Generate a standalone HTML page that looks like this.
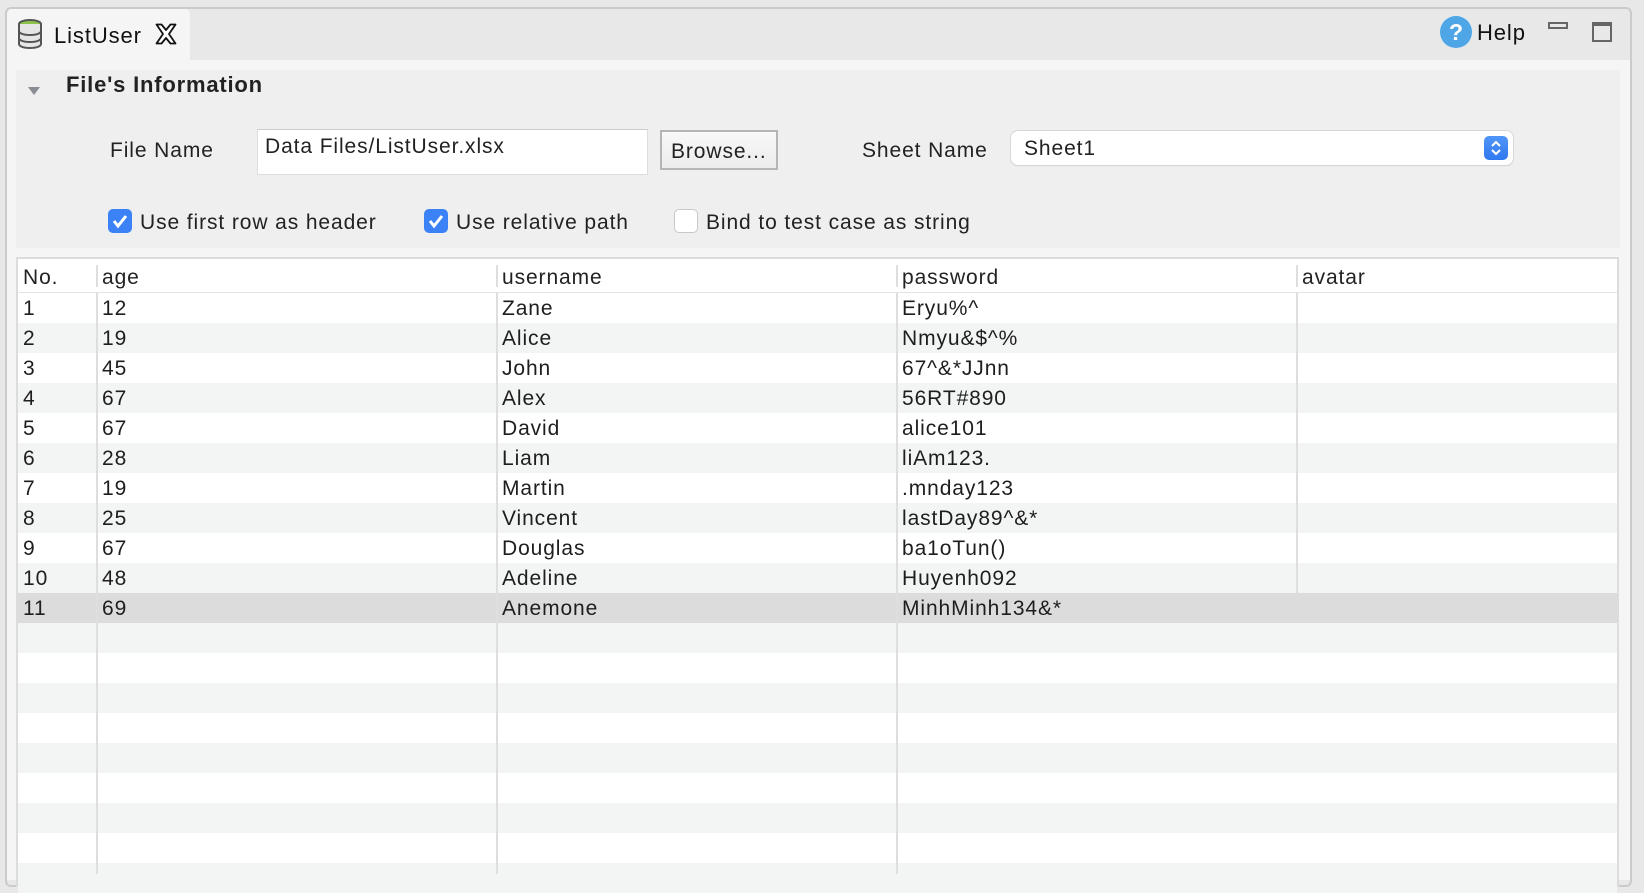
<!DOCTYPE html>
<html><head><meta charset="utf-8"><style>
*{box-sizing:border-box;margin:0;padding:0}
body{width:1644px;height:874px;background:#e8e8e8;font-family:"Liberation Sans",sans-serif;color:#222;position:relative;overflow:hidden}
.a{position:absolute}
.t{font-size:21px;white-space:nowrap;letter-spacing:0.9px}
.row{position:absolute;left:18px;width:1599px;height:30px}
.cell{position:absolute;top:4px;font-size:21px;color:#1e1e1e;white-space:nowrap;letter-spacing:0.9px}
.vl{position:absolute;top:258px;bottom:0;width:2px;background:#dedede}
.cb{position:absolute;width:24px;height:24px;border-radius:5px}
</style></head><body>
<div class="a" style="left:5px;top:7px;width:1627px;height:880px;border:2px solid #cbcbcb;border-radius:6px;background:#e8e8e8"></div>
<div class="a" style="left:7px;top:9px;width:183px;height:55px;background:#f5f5f5;border-radius:5px 5px 0 0"></div>
<svg class="a" style="left:17px;top:19px" width="26" height="30" viewBox="0 0 26 30">
<ellipse cx="13" cy="5" rx="11" ry="4" fill="#8bc34a" stroke="#555" stroke-width="2"/>
<path d="M2 5v20c0 2.5 5 4 11 4s11-1.5 11-4V5" fill="#e6e6e6" stroke="#555" stroke-width="2"/>
<path d="M2 12c0 2.5 5 4 11 4s11-1.5 11-4M2 19c0 2.5 5 4 11 4s11-1.5 11-4" fill="none" stroke="#555" stroke-width="2"/>
</svg>
<div class="a t" style="left:54px;top:23px;font-size:22px;color:#111">ListUser</div>
<svg class="a" style="left:154px;top:22px" width="24" height="24" viewBox="0 0 24 24"><path d="M2.5 2.5h5L12 8l4.5-5.5h5L15 12l6.5 9.5h-5L12 16l-4.5 5.5h-5L9 12z" fill="#fff" stroke="#111" stroke-width="1.8" stroke-linejoin="round"/></svg>
<svg class="a" style="left:1440px;top:16px" width="32" height="32"><circle cx="16" cy="16" r="16" fill="#4ea6e6"/><text x="16" y="24" font-family="Liberation Sans" font-weight="bold" font-size="23" fill="#fff" text-anchor="middle">?</text></svg>
<div class="a t" style="left:1477px;top:20px;font-size:22px;color:#111">Help</div>
<div class="a" style="left:1548px;top:22px;width:20px;height:7px;border:2px solid #666"></div>
<div class="a" style="left:1592px;top:22px;width:20px;height:20px;border:2px solid #666;border-top-width:4px"></div>
<div class="a" style="left:7px;top:60px;width:1623px;height:820px;background:#f5f5f5"></div>
<div class="a" style="left:16px;top:70px;width:1604px;height:178px;background:#efefef"></div>
<svg class="a" style="left:27px;top:86px" width="14" height="10"><path d="M1 1h12L7 9z" fill="#8a8d93"/></svg>
<div class="a t" style="left:66px;top:72px;font-weight:bold;font-size:22px;color:#222;letter-spacing:0.8px">File's Information</div>
<div class="a t" style="left:110px;top:139px">File Name</div>
<div class="a" style="left:257px;top:129px;width:391px;height:46px;background:#fff;border:1px solid #ddd;border-top-color:#ccc"></div>
<div class="a t" style="left:265px;top:135px">Data Files/ListUser.xlsx</div>
<div class="a" style="left:660px;top:130px;width:118px;height:40px;background:linear-gradient(#f8f8f8,#ececec);border:2px solid #b5b5b5"></div>
<div class="a t" style="left:671px;top:140px">Browse...</div>
<div class="a t" style="left:862px;top:139px">Sheet Name</div>
<div class="a" style="left:1011px;top:131px;width:502px;height:34px;background:#fff;border-radius:7px;box-shadow:0 0 0 1px #d6d6d6,0 1px 1px #ccc"></div>
<div class="a t" style="left:1024px;top:137px">Sheet1</div>
<div class="a" style="left:1484px;top:136px;width:24px;height:24px;border-radius:5px;background:linear-gradient(#4f95f7,#2f78ef)"></div>
<svg class="a" style="left:1484px;top:136px" width="24" height="24"><path d="M8 10l4-4 4 4M8 14l4 4 4-4" fill="none" stroke="#fff" stroke-width="2"/></svg>
<div class="cb" style="left:108px;top:209px;background:#3b82f6"></div>
<svg class="a" style="left:108px;top:209px" width="24" height="24"><path d="M6 12l4 5 8-10" fill="none" stroke="#fff" stroke-width="3"/></svg>
<div class="a t" style="left:140px;top:211px">Use first row as header</div>
<div class="cb" style="left:424px;top:209px;background:#3b82f6"></div>
<svg class="a" style="left:424px;top:209px" width="24" height="24"><path d="M6 12l4 5 8-10" fill="none" stroke="#fff" stroke-width="3"/></svg>
<div class="a t" style="left:456px;top:211px">Use relative path</div>
<div class="cb" style="left:674px;top:209px;background:#fff;border:1px solid #c8c8c8"></div>
<div class="a t" style="left:706px;top:211px">Bind to test case as string</div>
<div class="a" style="left:16px;top:257px;width:1603px;height:630px;background:#fff;border:2px solid #dcdcdc"></div>
<div class="a" style="left:18px;top:292px;width:1599px;height:1px;background:#e4e4e4"></div>
<div class="a t" style="left:23px;top:266px">No.</div>
<div class="a t" style="left:102px;top:266px">age</div>
<div class="a t" style="left:502px;top:266px">username</div>
<div class="a t" style="left:902px;top:266px">password</div>
<div class="a t" style="left:1302px;top:266px">avatar</div>
<div class="a" style="left:96px;top:265px;width:2px;height:22px;background:#dedede"></div>
<div class="a" style="left:496px;top:265px;width:2px;height:22px;background:#dedede"></div>
<div class="a" style="left:896px;top:265px;width:2px;height:22px;background:#dedede"></div>
<div class="a" style="left:1296px;top:265px;width:2px;height:22px;background:#dedede"></div>
<div class="row" style="top:293px;background:#fff"><span class="cell" style="left:5px">1</span><span class="cell" style="left:84px">12</span><span class="cell" style="left:484px">Zane</span><span class="cell" style="left:884px">Eryu%^</span></div>
<div class="row" style="top:323px;background:#f3f4f4"><span class="cell" style="left:5px">2</span><span class="cell" style="left:84px">19</span><span class="cell" style="left:484px">Alice</span><span class="cell" style="left:884px">Nmyu&amp;$^%</span></div>
<div class="row" style="top:353px;background:#fff"><span class="cell" style="left:5px">3</span><span class="cell" style="left:84px">45</span><span class="cell" style="left:484px">John</span><span class="cell" style="left:884px">67^&amp;*JJnn</span></div>
<div class="row" style="top:383px;background:#f3f4f4"><span class="cell" style="left:5px">4</span><span class="cell" style="left:84px">67</span><span class="cell" style="left:484px">Alex</span><span class="cell" style="left:884px">56RT#890</span></div>
<div class="row" style="top:413px;background:#fff"><span class="cell" style="left:5px">5</span><span class="cell" style="left:84px">67</span><span class="cell" style="left:484px">David</span><span class="cell" style="left:884px">alice101</span></div>
<div class="row" style="top:443px;background:#f3f4f4"><span class="cell" style="left:5px">6</span><span class="cell" style="left:84px">28</span><span class="cell" style="left:484px">Liam</span><span class="cell" style="left:884px">liAm123.</span></div>
<div class="row" style="top:473px;background:#fff"><span class="cell" style="left:5px">7</span><span class="cell" style="left:84px">19</span><span class="cell" style="left:484px">Martin</span><span class="cell" style="left:884px">.mnday123</span></div>
<div class="row" style="top:503px;background:#f3f4f4"><span class="cell" style="left:5px">8</span><span class="cell" style="left:84px">25</span><span class="cell" style="left:484px">Vincent</span><span class="cell" style="left:884px">lastDay89^&amp;*</span></div>
<div class="row" style="top:533px;background:#fff"><span class="cell" style="left:5px">9</span><span class="cell" style="left:84px">67</span><span class="cell" style="left:484px">Douglas</span><span class="cell" style="left:884px">ba1oTun()</span></div>
<div class="row" style="top:563px;background:#f3f4f4"><span class="cell" style="left:5px">10</span><span class="cell" style="left:84px">48</span><span class="cell" style="left:484px">Adeline</span><span class="cell" style="left:884px">Huyenh092</span></div>
<div class="row" style="top:593px;background:#dcdcdc"><span class="cell" style="left:5px">11</span><span class="cell" style="left:84px">69</span><span class="cell" style="left:484px">Anemone</span><span class="cell" style="left:884px">MinhMinh134&amp;*</span></div>
<div class="row" style="top:623px;background:#f3f4f4"></div>
<div class="row" style="top:683px;background:#f3f4f4"></div>
<div class="row" style="top:743px;background:#f3f4f4"></div>
<div class="row" style="top:803px;background:#f3f4f4"></div>
<div class="row" style="top:863px;background:#f3f4f4"></div>
<div class="vl" style="left:96px;top:293px"></div>
<div class="vl" style="left:496px;top:293px"></div>
<div class="vl" style="left:896px;top:293px"></div>
<div class="vl" style="left:1296px;top:293px;height:300px"></div>
</body></html>
